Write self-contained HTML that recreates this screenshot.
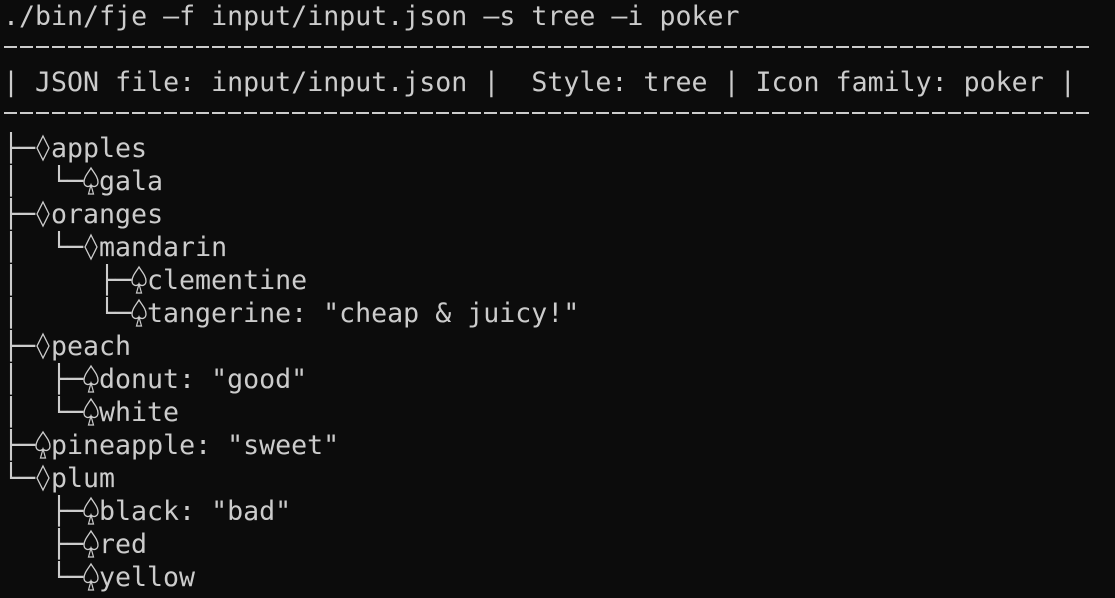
<!DOCTYPE html>
<html><head><meta charset="utf-8"><style>
html,body{margin:0;padding:0;background:#0c0c0c;width:1115px;height:598px;overflow:hidden}
.r{height:33px;line-height:33px;padding-left:3px;font-family:"DejaVu Sans Mono","Liberation Mono",monospace;font-size:26.6px;color:#cccccc;white-space:pre;overflow:visible;position:relative}
.c{display:inline-block;width:16px;height:33px;vertical-align:top;overflow:visible}
svg{display:inline-block;vertical-align:top;overflow:visible}
.dash{position:absolute;left:4px;width:1085px;height:2px;background:repeating-linear-gradient(90deg,#cccccc 0 13px,transparent 13px 16px)}
</style></head><body>
<svg width="0" height="0" style="position:absolute"><defs>
<g id="d"><path d="M8 4 L14 16 L8 28 L2 16 Z" fill="none" stroke="#cccccc" stroke-width="1.3"/></g>
<g id="s"><path d="M8 3 C5 8 1 12 1 17 C1 21 5 23 8 20 C11 23 15 21 15 17 C15 12 11 8 8 3 Z" fill="none" stroke="#cccccc" stroke-width="1.3"/><path d="M8 20 L5.5 29 L10.5 29 Z" fill="none" stroke="#cccccc" stroke-width="1.2"/></g>
</defs></svg>
<div class="dash" style="top:46px"></div>
<div class="dash" style="top:112px"></div>
<div class="r">./bin/fje –f input/input.json –s tree –i poker</div>
<div class="r"></div>
<div class="r">| JSON file: input/input.json |  Style: tree | Icon family: poker |</div>
<div class="r"></div>
<div class="r"><span class="c">├</span><span class="c">─</span><svg class="c" width="16" height="33"><use href="#d"/></svg>apples</div>
<div class="r"><span class="c">│</span><span class="c"> </span><span class="c"> </span><span class="c">└</span><span class="c">─</span><svg class="c" width="16" height="33"><use href="#s"/></svg>gala</div>
<div class="r"><span class="c">├</span><span class="c">─</span><svg class="c" width="16" height="33"><use href="#d"/></svg>oranges</div>
<div class="r"><span class="c">│</span><span class="c"> </span><span class="c"> </span><span class="c">└</span><span class="c">─</span><svg class="c" width="16" height="33"><use href="#d"/></svg>mandarin</div>
<div class="r"><span class="c">│</span><span class="c"> </span><span class="c"> </span><span class="c"> </span><span class="c"> </span><span class="c"> </span><span class="c">├</span><span class="c">─</span><svg class="c" width="16" height="33"><use href="#s"/></svg>clementine</div>
<div class="r"><span class="c">│</span><span class="c"> </span><span class="c"> </span><span class="c"> </span><span class="c"> </span><span class="c"> </span><span class="c">└</span><span class="c">─</span><svg class="c" width="16" height="33"><use href="#s"/></svg>tangerine: "cheap &amp; juicy!"</div>
<div class="r"><span class="c">├</span><span class="c">─</span><svg class="c" width="16" height="33"><use href="#d"/></svg>peach</div>
<div class="r"><span class="c">│</span><span class="c"> </span><span class="c"> </span><span class="c">├</span><span class="c">─</span><svg class="c" width="16" height="33"><use href="#s"/></svg>donut: "good"</div>
<div class="r"><span class="c">│</span><span class="c"> </span><span class="c"> </span><span class="c">└</span><span class="c">─</span><svg class="c" width="16" height="33"><use href="#s"/></svg>white</div>
<div class="r"><span class="c">├</span><span class="c">─</span><svg class="c" width="16" height="33"><use href="#s"/></svg>pineapple: "sweet"</div>
<div class="r"><span class="c">└</span><span class="c">─</span><svg class="c" width="16" height="33"><use href="#d"/></svg>plum</div>
<div class="r"><span class="c"> </span><span class="c"> </span><span class="c"> </span><span class="c">├</span><span class="c">─</span><svg class="c" width="16" height="33"><use href="#s"/></svg>black: "bad"</div>
<div class="r"><span class="c"> </span><span class="c"> </span><span class="c"> </span><span class="c">├</span><span class="c">─</span><svg class="c" width="16" height="33"><use href="#s"/></svg>red</div>
<div class="r"><span class="c"> </span><span class="c"> </span><span class="c"> </span><span class="c">└</span><span class="c">─</span><svg class="c" width="16" height="33"><use href="#s"/></svg>yellow</div>
</body></html>
